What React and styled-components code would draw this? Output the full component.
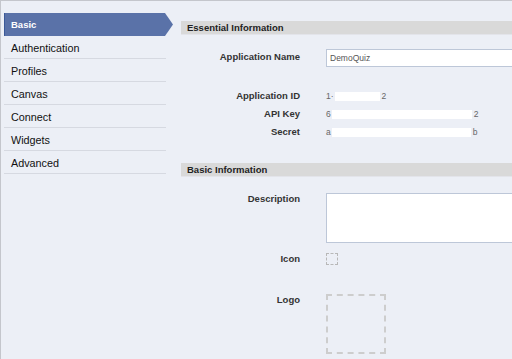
import React from "react";
import styled, { createGlobalStyle } from "styled-components";

const GlobalStyle = createGlobalStyle`
  html, body {
    margin: 0;
    padding: 0;
    overflow: hidden;
    background: #eceff6;
  }
  body {
    font-family: "Liberation Sans", Arial, sans-serif;
  }
`;

const Page = styled.div`
  display: flex;
  width: 100%;
  height: 359px;
  box-sizing: border-box;
  background: #eceff6;
  border-top: 1px solid #c4c6cc;
  border-left: 1px solid #c4c6cc;
  overflow: hidden;
`;

const Sidebar = styled.nav`
  width: 180px;
  flex-shrink: 0;
  box-sizing: border-box;
  padding: 12px 0 0 3px;
`;

const Tab = styled.div`
  width: 169px;
  height: 23px;
  box-sizing: border-box;
  display: flex;
  align-items: center;
  padding-left: 6px;
  background: #5a72a8;
  border-left: 1px solid #3b5998;
  color: #fff;
  font-size: 9.5px;
  font-weight: bold;
  clip-path: polygon(0 0, calc(100% - 8px) 0, 100% 50%, calc(100% - 8px) 100%, 0 100%);
`;

const MenuItem = styled.div`
  width: 162px;
  height: 23px;
  box-sizing: border-box;
  display: flex;
  align-items: center;
  padding: 1px 0 0 7px;
  border-bottom: 1px solid #d6d9e1;
  color: #111;
  font-size: 10.8px;
`;

const Main = styled.main`
  flex: 1;
  min-width: 0;
  padding-top: 20px;
  overflow: hidden;
`;

const SectionBar = styled.div`
  height: 13px;
  line-height: 13px;
  padding-left: 6px;
  background: #d9d9d9;
  border-bottom: 1px solid #e3e4ea;
  color: #222;
  font-size: 9.5px;
  font-weight: bold;
  margin-top: ${(p) => p.$top || 0}px;
`;

const Row = styled.div`
  display: grid;
  grid-template-columns: 119px 1fr;
  column-gap: 26px;
  align-items: ${(p) => (p.$top ? "start" : "center")};
  min-height: ${(p) => (p.$top ? 0 : 18)}px;
  margin-top: ${(p) => p.$gap || 0}px;
`;

const Label = styled.div`
  text-align: right;
  color: #333;
  font-size: 9.5px;
  font-weight: bold;
  line-height: 12px;
  padding-top: ${(p) => p.$pad || 0}px;
`;

const TextInput = styled.div`
  width: 100%;
  height: 18px;
  box-sizing: border-box;
  display: flex;
  align-items: center;
  padding-left: 3px;
  background: #fff;
  border: 1px solid #bdc7d8;
  border-right: none;
  color: #555;
  font-size: 8.5px;
`;

const TextArea = styled.div`
  width: 100%;
  height: 50px;
  box-sizing: border-box;
  background: #fff;
  border: 1px solid #bdc7d8;
  border-right: none;
`;

const Value = styled.div`
  display: flex;
  align-items: center;
  color: #666;
  font-size: 8.5px;
  height: 18px;
`;

const Mask = styled.span`
  display: inline-block;
  width: ${(p) => p.$w}px;
  height: 9px;
  margin: 0 2px 0 1px;
  background: #fff;
`;

const IconSlot = styled.div`
  width: 12px;
  height: 12px;
  box-sizing: border-box;
  border: 1px dashed #b8b8b8;
`;

const LogoSlot = styled.div`
  width: 60px;
  height: 60px;
  box-sizing: border-box;
  border: 2px dashed #cdcdcd;
`;

const menu = ["Authentication", "Profiles", "Canvas", "Connect", "Widgets", "Advanced"];

export default function App() {
  return (
    <>
      <GlobalStyle />
      <Page>
        <Sidebar>
          <Tab>Basic</Tab>
          {menu.map((m) => (
            <MenuItem key={m}>{m}</MenuItem>
          ))}
        </Sidebar>
        <Main>
          <SectionBar>Essential Information</SectionBar>
          <Row $gap={14} $top>
            <Label $pad={2}>Application Name</Label>
            <TextInput>DemoQuiz</TextInput>
          </Row>
          <Row $gap={20}>
            <Label>Application ID</Label>
            <Value>
              1·<Mask $w={45} />2
            </Value>
          </Row>
          <Row>
            <Label>API Key</Label>
            <Value>
              6<Mask $w={140} />2
            </Value>
          </Row>
          <Row>
            <Label>Secret</Label>
            <Value>
              a<Mask $w={139} />b
            </Value>
          </Row>
          <SectionBar $top={22}>Basic Information</SectionBar>
          <Row $gap={16} $top>
            <Label>Description</Label>
            <TextArea />
          </Row>
          <Row $gap={10} $top>
            <Label>Icon</Label>
            <IconSlot />
          </Row>
          <Row $gap={29} $top>
            <Label>Logo</Label>
            <LogoSlot />
          </Row>
        </Main>
      </Page>
    </>
  );
}
